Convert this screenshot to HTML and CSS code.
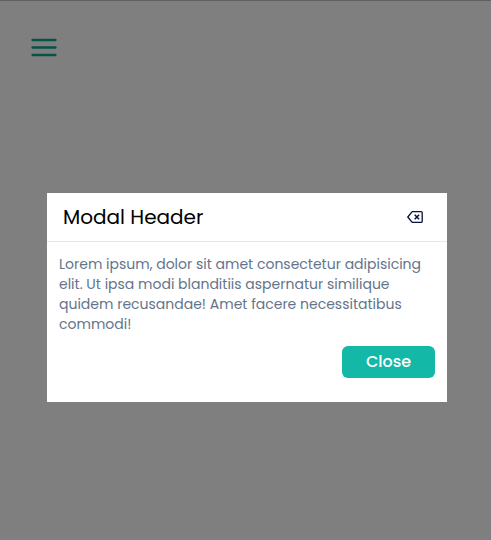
FILE: index.html
```html
<!DOCTYPE html>
<html lang="en">
<head>
<meta charset="utf-8">
<title>Modal</title>
<link rel="stylesheet" href="styles.css">
</head>
<body>
<div class="page">
  <button class="menu" aria-label="Menu">
    <svg width="30" height="30" viewBox="0 0 30 30" fill="none" stroke="#0fa593" stroke-width="2.3" stroke-linecap="round"><path d="M3.5 7h23M3.5 14.5h23M3.5 22h23"/></svg>
  </button>
</div>
<div class="overlay">
  <section class="modal" role="dialog">
    <header class="modal-header">
      <h1 class="title">Modal Header</h1>
      <svg class="dismiss" width="16" height="16" viewBox="0 0 16 16" fill="none" stroke="#06103a" stroke-width="1.3" stroke-linejoin="round"><path d="M5.2 2.6h9a1 1 0 0 1 1 1v8.8a1 1 0 0 1-1 1h-9L.8 8z"/><path stroke-width="1.5" d="M7.7 5.8l4.4 4.4M12.1 5.8l-4.4 4.4"/></svg>
    </header>
    <div class="modal-body">
      <p class="copy">Lorem ipsum, dolor sit amet consectetur adipisicing elit. Ut ipsa modi blanditiis aspernatur similique quidem recusandae! Amet facere necessitatibus commodi!</p>
      <button class="close">Close</button>
    </div>
  </section>
</div>
</body>
</html>
```
FILE: styles.css
```css
* { box-sizing: border-box; }
body { margin: 0; background: #fff; font-family: Poppins, Inter, sans-serif; overflow: hidden; }
h1, p { margin: 0; }
button { border: 0; font: inherit; }
.page { height: 540px; padding: 32px 29px; border-top: 1px solid #c0c0c6; }
.menu { display: block; padding: 0; background: none; height: 30px; }
.overlay {
  position: fixed; inset: 0; display: flex; align-items: center; justify-content: center;
  padding: 55px 0 0 3px; background: rgba(0, 0, 0, .5);
}
.modal { width: 400px; height: 209px; background: #fff; }
.modal-header {
  display: flex; align-items: center; justify-content: space-between;
  height: 49px; padding: 0 24px 0 16px; border-bottom: 1px solid #e5e7eb;
}
.title { font-size: 20px; line-height: 28px; font-weight: 400; color: #000; }
.modal-body { display: flex; flex-direction: column; padding: 12px; }
.copy { font-size: 14px; line-height: 20px; color: #64748b; }
.close {
  align-self: flex-end; width: 93px; height: 32px; margin-top: 12px; padding: 0;
  border-radius: 6px; background: #14b8a6; color: #fff;
  font-size: 16px; line-height: 32px; font-weight: 500;
}
```
